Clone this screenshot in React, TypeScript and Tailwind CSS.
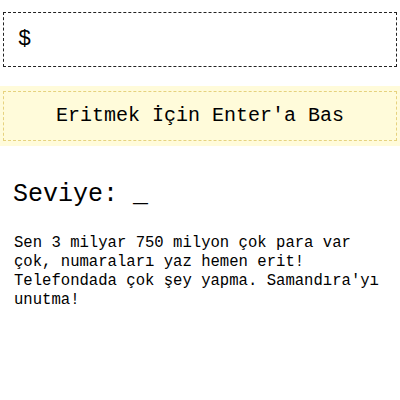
const App = () => (
  <main className="min-h-screen bg-white text-black pt-[12px]" style={{ fontFamily: '"Liberation Mono", "Courier New", monospace' }}>
    <div className="mx-[3px] h-[55px] border border-dashed border-[#222] flex items-center px-[14px] text-[22px]">
      $
    </div>
    <div className="mt-[19px] bg-[#fffbda] px-[3px] py-[5px]">
      <div className="h-[50px] border border-dashed border-[#e6d27e] flex items-center justify-center text-[20px]">
        Eritmek İçin Enter'a Bas
      </div>
    </div>
    <h2 className="mt-[35px] ml-[13px] text-[25px] leading-[28px]">Seviye: _</h2>
    <p className="mt-[25px] ml-[14px] mr-[10px] text-[15.6px] leading-[19px]">
      Sen 3 milyar 750 milyon çok para var çok, numaraları yaz hemen erit! Telefondada çok şey yapma. Samandıra'yı unutma!
    </p>
  </main>
);

export default App;
